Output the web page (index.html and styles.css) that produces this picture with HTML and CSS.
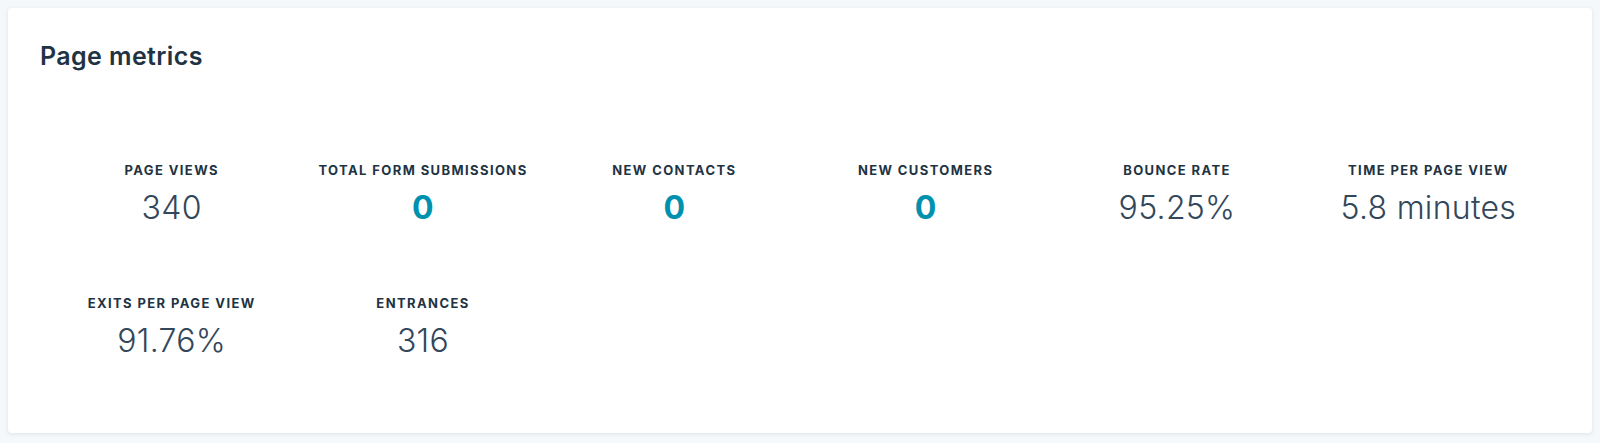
FILE: index.html
```html
<!DOCTYPE html>
<html lang="en">

<head>
    <meta charset="UTF-8">
    <meta name="viewport" content="width=device-width, initial-scale=1.0">
    <title>Page metrics</title>
    <link rel="stylesheet" href="styles.css">
</head>

<body>

    <!-- Page metrics card -->
    <section class="metrics-card">
        <h2 class="card-title">Page metrics</h2>

        <div class="stats-grid">
            <div class="stat">
                <div class="stat-label">Page views</div>
                <div class="stat-value">340</div>
            </div>
            <div class="stat">
                <div class="stat-label">Total form submissions</div>
                <div class="stat-value stat-link">0</div>
            </div>
            <div class="stat">
                <div class="stat-label">New contacts</div>
                <div class="stat-value stat-link">0</div>
            </div>
            <div class="stat">
                <div class="stat-label">New customers</div>
                <div class="stat-value stat-link">0</div>
            </div>
            <div class="stat">
                <div class="stat-label">Bounce rate</div>
                <div class="stat-value">95.25%</div>
            </div>
            <div class="stat">
                <div class="stat-label">Time per page view</div>
                <div class="stat-value">5.8 minutes</div>
            </div>
            <div class="stat">
                <div class="stat-label">Exits per page view</div>
                <div class="stat-value">91.76%</div>
            </div>
            <div class="stat">
                <div class="stat-label">Entrances</div>
                <div class="stat-value">316</div>
            </div>
        </div>
    </section>

</body>

</html>
```

FILE: styles.css
```css
body {
    font-family: Inter, "Noto Sans", sans-serif;
    margin: 0;
    padding: 8px;
    background-color: #f5f8fa;
    color: #33475b;
}

.metrics-card {
    background-color: #ffffff;
    border-radius: 4px;
    box-shadow: 0 1px 4px rgba(45, 62, 80, 0.12);
    padding: 32px 32px 72px 32px;
}

.card-title {
    margin: 0;
    font-size: 25px;
    line-height: 32px;
    font-weight: 600;
    letter-spacing: 0.4px;
    color: #213343;
}

.stats-grid {
    display: grid;
    grid-template-columns: repeat(6, 1fr);
    row-gap: 67px;
    margin-top: 90px;
    padding: 0 6px;
}

.stat {
    display: flex;
    flex-direction: column;
    align-items: center;
    gap: 10px;
    text-align: center;
}

.stat-label {
    font-size: 13px;
    line-height: 16px;
    font-weight: 700;
    letter-spacing: 1.4px;
    text-transform: uppercase;
    color: #213343;
}

.stat-value {
    font-size: 32px;
    line-height: 40px;
    font-weight: 300;
    letter-spacing: 0.3px;
    color: #33475b;
}

.stat-link {
    font-weight: 700;
    color: #0091ae;
}
```
